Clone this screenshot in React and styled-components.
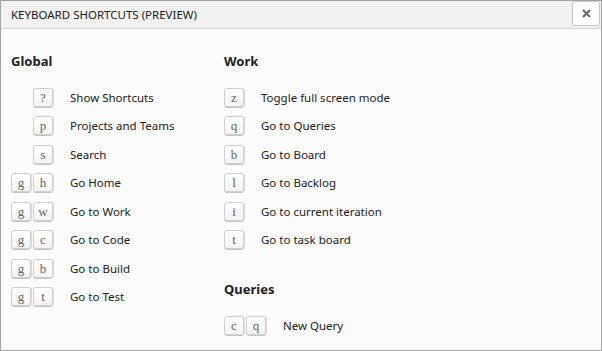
import React from 'react'
import styled, {createGlobalStyle} from 'styled-components'

const GlobalStyle = createGlobalStyle`
html, body {
  margin: 0;
  padding: 0;
  background: #ffffff;
}
body {
  font-family: "Segoe UI", "Noto Sans", "Open Sans", sans-serif;
}
`;

const sections = {
    left: [
        {
            title: "Global",
            items: [
                {keys: ["?"], label: "Show Shortcuts"},
                {keys: ["p"], label: "Projects and Teams"},
                {keys: ["s"], label: "Search"},
                {keys: ["g", "h"], label: "Go Home"},
                {keys: ["g", "w"], label: "Go to Work"},
                {keys: ["g", "c"], label: "Go to Code"},
                {keys: ["g", "b"], label: "Go to Build"},
                {keys: ["g", "t"], label: "Go to Test"},
            ]
        }
    ],
    right: [
        {
            title: "Work",
            items: [
                {keys: ["z"], label: "Toggle full screen mode"},
                {keys: ["q"], label: "Go to Queries"},
                {keys: ["b"], label: "Go to Board"},
                {keys: ["l"], label: "Go to Backlog"},
                {keys: ["i"], label: "Go to current iteration"},
                {keys: ["t"], label: "Go to task board"},
            ]
        },
        {
            title: "Queries",
            items: [
                {keys: ["c", "q"], label: "New Query"},
            ]
        }
    ]
}

function Section({title, items}){
    return(
        <SectionBox>
            <Heading>{title}</Heading>
            <ShortcutGrid>
                {items.map((item, i) => (
                    <React.Fragment key={i}>
                        <Keys>
                            {item.keys.map((k, j) => <Key key={j}>{k}</Key>)}
                        </Keys>
                        <Label>{item.label}</Label>
                    </React.Fragment>
                ))}
            </ShortcutGrid>
        </SectionBox>
    )
}

function App(){
    return(
        <>
        <GlobalStyle />
        <Dialog>
            <TitleBar>
                <Title>KEYBOARD SHORTCUTS (PREVIEW)</Title>
                <CloseButton aria-label="close">
                    <svg width="9" height="9" viewBox="0 0 9 9">
                        <path d="M1 1 L8 8 M8 1 L1 8" stroke="#666" strokeWidth="2" />
                    </svg>
                </CloseButton>
            </TitleBar>
            <Body>
                <Column $width="213px">
                    {sections.left.map(s => <Section key={s.title} {...s} />)}
                </Column>
                <Column>
                    {sections.right.map(s => <Section key={s.title} {...s} />)}
                </Column>
            </Body>
        </Dialog>
        </>
    )
}

const Dialog = styled.div`
width: 602px;
height: 351px;
box-sizing: border-box;
border: 1px solid #a3a3a3;
background-color: #fcfcfc;
display: flex;
flex-direction: column;
`;
const TitleBar = styled.div`
height: 27px;
flex-shrink: 0;
background-color: #f2f2f2;
border-bottom: 1px solid #d6d6d6;
display: flex;
align-items: center;
justify-content: space-between;
padding-left: 10px;
`;
const Title = styled.div`
font-size: 11.5px;
color: #222;
`;
const CloseButton = styled.button`
width: 28px;
height: 25px;
margin-right: 1px;
align-self: flex-start;
background: #ffffff;
border: 1px solid #c6c6c6;
border-radius: 2px;
display: flex;
align-items: center;
justify-content: center;
padding: 0;
`;
const Body = styled.div`
flex: 1;
display: flex;
padding: 23px 0 0 10px;
`;
const Column = styled.div`
width: ${p => p.$width || "auto"};
display: flex;
flex-direction: column;
gap: 26px;
`;
const SectionBox = styled.div`
display: flex;
flex-direction: column;
`;
const Heading = styled.h3`
margin: 0 0 13px 0;
font-size: 13px;
font-weight: 700;
line-height: 18px;
color: #222;
`;
const ShortcutGrid = styled.div`
display: grid;
grid-template-columns: max-content 1fr;
grid-auto-rows: 28.5px;
align-items: center;
`;
const Keys = styled.div`
display: flex;
justify-content: flex-end;
gap: 2px;
padding-right: 17px;
`;
const Key = styled.span`
display: inline-flex;
align-items: center;
justify-content: center;
box-sizing: border-box;
width: 20px;
height: 19px;
border: 1px solid #cfcfcf;
border-radius: 3px;
background: linear-gradient(#ffffff, #f3f3f3);
box-shadow: 0 1px 0 #c4c4c4, 1px 0 0 #dcdcdc;
font-family: "Liberation Serif", "Times New Roman", serif;
font-size: 13px;
line-height: 1;
color: #666;
`;
const Label = styled.span`
font-size: 11.5px;
color: #222;
`;

export default App
